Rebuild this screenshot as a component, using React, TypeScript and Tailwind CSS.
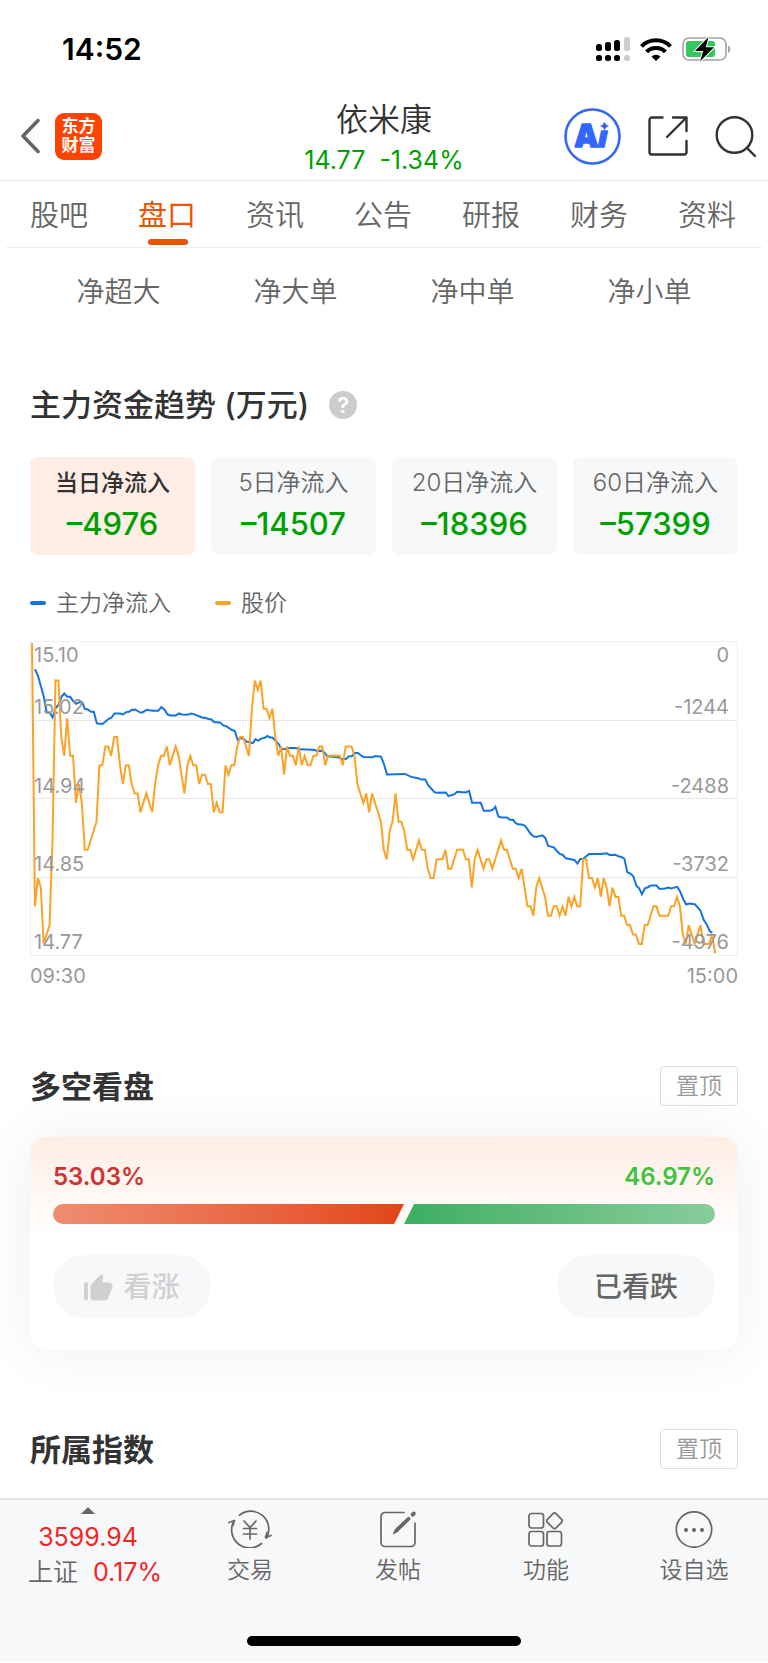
import { useState } from 'react';
import type { ReactNode } from 'react';

const TABS = ['股吧', '盘口', '资讯', '公告', '研报', '财务', '资料'];
const ORDER_TYPES = ['净超大', '净大单', '净中单', '净小单'];

const PERIODS = [
  { label: '当日净流入', value: '–4976' },
  { label: '5日净流入', value: '–14507' },
  { label: '20日净流入', value: '–18396' },
  { label: '60日净流入', value: '–57399' },
];

const AXIS_ROWS = [
  { price: '15.02', flow: '-1244' },
  { price: '14.94', flow: '-2488' },
  { price: '14.85', flow: '-3732' },
  { price: '14.77', flow: '-4976' },
];

// one entry per minute, in cents below the 15.10 high
const PRICE_DROPS = [
  0, 28, 25, 26, 32, 31, 30, 21, 4, 4, 10, 12, 8, 12, 12, 17, 15, 17, 22, 22,
  21, 20, 19, 13, 13, 11, 11, 12, 10, 10, 13, 15, 13, 13, 15, 16, 16, 18, 17, 16,
  17, 18, 15, 13, 12, 12, 11, 13, 12, 11, 12, 14, 16, 13, 12, 13, 13, 15, 14, 14,
  15, 15, 18, 17, 18, 18, 13, 14, 13, 13, 11, 10, 10, 11, 12, 7, 4, 5, 4, 7,
  7, 8, 7, 10, 12, 11, 14, 11, 12, 12, 13, 11, 13, 12, 13, 13, 12, 12, 11, 11,
  13, 12, 12, 12, 12, 12, 13, 11, 11, 11, 12, 15, 16, 17, 16, 18, 16, 17, 18, 19,
  22, 23, 20, 19, 16, 19, 19, 20, 22, 22, 23, 22, 21, 22, 22, 24, 25, 25, 23, 23,
  23, 22, 24, 24, 23, 22, 22, 22, 23, 23, 26, 23, 22, 23, 24, 23, 23, 24, 23, 22,
  21, 22, 22, 23, 24, 24, 25, 24, 26, 28, 28, 29, 26, 25, 26, 27, 29, 29, 28, 28,
  29, 28, 29, 27, 28, 27, 28, 28, 23, 23, 25, 25, 26, 25, 27, 25, 26, 28, 26, 27,
  27, 29, 29, 30, 30, 31, 31, 32, 32, 30, 30, 29, 28, 28, 29, 29, 29, 29, 28, 28,
  27, 28, 31, 32, 30, 31, 32, 31, 30, 32, 32, 32, 31, 33,
];

const PRICE_POINTS = PRICE_DROPS.map((drop, minute) => `${(33 + minute * 8.82).toFixed(1)},${(39 + drop * 28.3).toFixed(1)}`).join(' ');

const FLOW_POINTS =
  '42,118 51,138 60,170 69,203 77,248 86,248 95,263 104,235 113,225 122,200 130,191 139,201 148,201 157,214 166,222 175,217 184,217 ' +
  '192,237 201,239 210,246 219,246 228,281 245,283 263,268 272,264 281,251 298,251 307,254 316,247 325,246 334,240 343,239 360,249 ' +
  '369,246 378,240 396,243 413,243 422,232 431,239 440,253 449,257 466,257 475,251 484,254 502,255 511,251 520,253 546,264 555,264 ' +
  '564,268 573,269 581,277 599,278 608,287 617,289 635,301 643,304 652,331 661,325 670,328 679,336 688,337 697,341 705,329 714,333 ' +
  '723,326 732,325 741,319 748,323 757,324 775,343 783,357 792,359 802,355 827,355 837,359 880,360 892,364 907,363 922,380 955,383 ' +
  '965,388 977,388 987,380 995,380 1005,370 1013,370 1030,382 1057,383 1066,379 1083,381 1092,404 1101,435 1155,433 1174,442 1195,446 ' +
  '1205,450 1216,450 1225,467 1243,487 1250,490 1278,489 1286,500 1304,494 1312,487 1338,489 1348,484 1357,520 1383,520 1392,544 ' +
  '1410,544 1419,541 1427,532 1436,561 1445,564 1462,564 1471,571 1480,571 1489,582 1498,585 1507,585 1516,589 1524,600 1533,613 ' +
  '1542,621 1550,623 1568,618 1577,625 1586,650 1603,654 1612,665 1621,674 1630,677 1639,687 1665,692 1674,703 1683,689 1692,688 ' +
  '1709,674 1745,674 1762,672 1771,677 1788,676 1797,681 1806,683 1815,688 1824,729 1833,733 1842,741 1851,769 1860,778 1868,795 ' +
  '1877,777 1886,774 1894,769 1912,769 1921,779 1938,778 1947,775 1956,778 1974,773 1983,787 1992,809 2001,826 2010,823 2027,825 ' +
  '2044,844 2054,873 2063,886 2072,906 2079,912';

function StatusBar() {
  return (
    <div className="flex items-center justify-between pt-[34px] pr-9 pb-7 pl-[62px]">
      <span className="text-[30px] leading-[30px] font-semibold text-black">14:52</span>
      <div className="flex items-center gap-2.5">
        <svg width="34" height="25" viewBox="0 0 34 25" aria-hidden="true">
          <rect x="0" y="7" width="6" height="7" rx="2.5" />
          <rect x="9" y="5" width="6" height="9" rx="2.5" />
          <rect x="18" y="3" width="6" height="11" rx="2.5" />
          <rect x="28" y="0" width="6" height="14" rx="2.5" fill="#ccc" />
          <rect x="0" y="18" width="6" height="6" rx="2.5" />
          <rect x="9" y="18" width="6" height="6" rx="2.5" />
          <rect x="18" y="18" width="6" height="6" rx="2.5" />
          <rect x="28" y="18" width="6" height="6" rx="2.5" fill="#ccc" />
        </svg>
        <svg width="32" height="23" viewBox="0 0 32 23" fill="none" stroke="#000" strokeWidth="4" aria-hidden="true">
          <path d="M1.500 8.300a20.500 20.500 0 0 1 29 0" />
          <path d="M6.600 13.800a13.300 13.300 0 0 1 18.800 0" />
          <path d="M11.500 18.600a6.300 6.300 0 0 1 9 0L16 23z" fill="#000" stroke="none" />
        </svg>
        <svg width="50" height="26" viewBox="0 0 50 26" aria-hidden="true">
          <rect x="1" y="2" width="43" height="22" rx="6" fill="none" stroke="#a3a3a3" strokeWidth="1.6" />
          <rect x="4" y="5" width="29" height="16" rx="3" fill="#34c759" />
          <path d="M46 9.500c3 1 3 6.500 0 7.500z" fill="#a3a3a3" />
          <path d="M26.500 1L13 15h8.200L18 25.500 32 11.300h-8.300z" fill="#000" stroke="#fff" strokeWidth="2" paintOrder="stroke" />
        </svg>
      </div>
    </div>
  );
}

function Header() {
  return (
    <header className="grid grid-cols-[1fr_auto_1fr] items-center border-b border-[#e8e8e8]">
      <div className="flex items-center gap-[15px] pl-5">
        <button type="button" aria-label="返回">
          <svg width="20" height="36" viewBox="0 0 20 36" fill="none" stroke="#666" strokeWidth="3.600" strokeLinecap="round" strokeLinejoin="round">
            <path d="M18 2.500L3 18l15 15.500" />
          </svg>
        </button>
        <span className="flex size-[47px] flex-col items-center justify-center rounded-[9px] bg-[#ff4400] text-[17px] leading-[19px] font-bold text-white">
          <span>东方</span>
          <span>财富</span>
        </span>
      </div>
      <div className="pt-2 text-center">
        <h1 className="text-[32px] leading-10 font-[350] text-[#333]">依米康</h1>
        <p className="flex gap-3.5 text-[25px] leading-10 text-[#00a000]">
          <span>14.77</span>
          <span>-1.34%</span>
        </p>
      </div>
      <div className="flex items-center justify-end gap-[27px] pr-3">
        <button type="button" aria-label="智能助手">
          <svg width="57" height="57" viewBox="0 0 57 57" fill="#3366ff">
            <circle cx="28.500" cy="28.500" r="27" fill="none" stroke="#3366ff" strokeWidth="2.600" />
            <g fontFamily="Open Sans" fontWeight="800" stroke="#3366ff" strokeWidth="1.600" strokeLinejoin="round">
              <text x="11" y="39" fontSize="31">A</text>
              <text x="34" y="39" fontSize="29" fontStyle="italic">ı</text>
            </g>
            <path d="M40.500 13.500q1 3.500 4.500 4.500-3.500 1-4.500 4.500-1-3.500-4.500-4.500 3.500-1 4.500-4.500z" />
          </svg>
        </button>
        <button type="button" aria-label="分享">
          <svg width="40" height="40" viewBox="0 0 40 40" fill="none" stroke="#333" strokeWidth="2.400" strokeLinecap="round" strokeLinejoin="round">
            <path d="M14.500 1.500H4A2.500 2.500 0 0 0 1.500 4v32A2.500 2.500 0 0 0 4 38.500h32a2.500 2.500 0 0 0 2.500-2.500V25" />
            <path d="M25 1.500h13.500V15M37.500 2.500L19 21" />
          </svg>
        </button>
        <button type="button" aria-label="搜索">
          <svg width="41" height="41" viewBox="0 0 41 41" fill="none" stroke="#333" strokeWidth="2.400" strokeLinecap="round">
            <circle cx="19.500" cy="19" r="17.800" />
            <path d="M32 32l8 8" />
          </svg>
        </button>
      </div>
    </header>
  );
}

function Tabs() {
  const [active, setActive] = useState('盘口');
  return (
    <nav className="mx-1.5 flex border-b border-[#eee]">
      {TABS.map((tab) => (
        <button
          key={tab}
          type="button"
          onClick={() => setActive(tab)}
          className={`relative flex-1 pt-[17px] pr-0.5 pb-[13px] text-[29px] leading-9 ${tab === active ? 'text-[#ea5504]' : 'font-[350] text-[#666]'}`}
        >
          {tab}
          {tab === active && <span className="absolute bottom-0.5 left-1/2 h-1.5 w-10 -translate-x-1/2 rounded-full bg-[#ea5504]" />}
        </button>
      ))}
    </nav>
  );
}

function TrendChart() {
  return (
    <div>
      <div className="relative mt-[22px] h-[315px] border border-[#f0f0f0]">
        <div className="absolute inset-0 flex flex-col">
          {AXIS_ROWS.map((row) => (
            <div key={row.price} className="flex-1 border-b border-[#e8e8e8] last:border-b-0" />
          ))}
        </div>
        <svg className="absolute inset-0 h-full w-full overflow-visible" viewBox="30 36 2124 942" preserveAspectRatio="none" fill="none" strokeWidth="2">
          <polyline points={FLOW_POINTS} stroke="#1473e0" vectorEffect="non-scaling-stroke" />
          <polyline points={PRICE_POINTS} stroke="#fba326" vectorEffect="non-scaling-stroke" />
        </svg>
        <div className="absolute inset-0 flex flex-col pr-2 pl-[3px] text-xl leading-[26px] text-[#999]">
          {AXIS_ROWS.map((row, i) => (
            <div key={row.price} className="flex flex-1 flex-col justify-end">
              {i === 0 && (
                <div className="mb-auto flex justify-between">
                  <span>15.10</span>
                  <span>0</span>
                </div>
              )}
              <div className="flex justify-between">
                <span>{row.price}</span>
                <span>{row.flow}</span>
              </div>
            </div>
          ))}
        </div>
      </div>
      <div className="mt-2 flex justify-between text-xl leading-6 text-[#999]">
        <span>09:30</span>
        <span>15:00</span>
      </div>
    </div>
  );
}

function FundTrend() {
  const [selected, setSelected] = useState(0);
  return (
    <section className="mt-[75px] px-[30px]">
      <div className="flex items-center gap-5">
        <h2 className="text-[31px] leading-10 font-medium text-[#333]">主力资金趋势 (万元)</h2>
        <button type="button" aria-label="说明" className="size-7 rounded-full bg-[#ccc] text-[22px] leading-7 font-semibold text-white">
          ?
        </button>
      </div>
      <div className="mt-8 grid grid-cols-4 gap-4">
        {PERIODS.map((period, i) => (
          <button
            key={period.label}
            type="button"
            onClick={() => setSelected(i)}
            className={`flex flex-col items-center gap-1 rounded-lg py-2.5 ${i === selected ? 'bg-[#ffede6]' : 'bg-[#f7f8fa]'}`}
          >
            <span className={`leading-8 ${i === selected ? 'text-[23px] font-medium text-[#333]' : 'text-2xl font-[350] text-[#666]'}`}>{period.label}</span>
            <span className="text-[31px] leading-[42px] font-medium text-[#00a000]">{period.value}</span>
          </button>
        ))}
      </div>
      <div className="mt-8 flex gap-11 text-[23px] leading-8 font-[350] text-[#666]">
        <span className="flex items-center gap-2.5">
          <span className="h-1 w-4 rounded-full bg-[#1473e0]" />
          主力净流入
        </span>
        <span className="flex items-center gap-2.5">
          <span className="h-1 w-4 rounded-full bg-[#fba326]" />
          股价
        </span>
      </div>
      <TrendChart />
    </section>
  );
}

function SectionTitle({ children }: { children: ReactNode }) {
  return (
    <div className="flex items-center justify-between">
      <h2 className="pt-0.5 text-[31px] leading-[38px] font-semibold text-[#333]">{children}</h2>
      <button type="button" className="rounded-sm border border-[#ddd] px-[15px] text-[23px] leading-[38px] font-[350] text-[#999]">
        置顶
      </button>
    </div>
  );
}

function Sentiment() {
  return (
    <section className="mt-[78px] px-[30px]">
      <SectionTitle>多空看盘</SectionTitle>
      <div className="mt-[31px] rounded-2xl bg-white bg-[linear-gradient(#ffede4,#fff_98px)] px-[23px] pt-6 pb-8 shadow-[0_0_60px_rgba(0,0,0,0.07)]">
        <div className="flex justify-between text-2xl leading-8 font-semibold">
          <span className="text-[#cc3333]">53.03%</span>
          <span className="text-[#3dc43d]">46.97%</span>
        </div>
        <div className="mt-[11px] flex h-5 overflow-hidden rounded-full">
          <div
            className="-mr-[5px] bg-linear-to-r from-[#f08c70] to-[#e34415] [clip-path:polygon(0_0,100%_0,calc(100%-10px)_100%,0_100%)]"
            style={{ width: '53.03%' }}
          />
          <div className="ml-[5px] flex-1 bg-linear-to-r from-[#3cae62] to-[#88cc9c] [clip-path:polygon(10px_0,100%_0,100%_100%,0_100%)]" />
        </div>
        <div className="mt-[31px] flex justify-between text-[28px] leading-[61px] font-medium">
          <button type="button" className="flex w-[158px] items-center justify-center gap-2.5 rounded-full bg-[#f7f8fa] pt-0.5 text-[#d0d0d2]">
            <svg width="29" height="27" viewBox="0 0 29 27" fill="currentColor" aria-hidden="true">
              <rect x="0" y="8" width="4" height="18.500" rx="2" />
              <path d="M6.500 13.500c0-1.800.6-3 1.800-4.200L16.200.9c1.200-1.100 3.100-.2 3 1.500l-.6 6.100h6.200c3 0 4.500 2.800 3.400 5.400l-4 10.200c-.6 1.500-1.700 2.400-3.300 2.400H10c-2.200 0-3.500-1.300-3.500-3.500z" />
            </svg>
            看涨
          </button>
          <button type="button" className="w-[158px] rounded-full bg-[#f7f8fa] pt-0.5 text-[#666]">
            已看跌
          </button>
        </div>
      </div>
    </section>
  );
}

function NavItem({ label, children }: { label: string; children: ReactNode }) {
  return (
    <button type="button" className="flex flex-1 flex-col items-center gap-1.5 pt-2.5 text-[23px] leading-8 font-[350] text-[#666]">
      <svg width="44" height="38" viewBox="0 0 44 38" fill="none" stroke="#666" strokeWidth="1.700" strokeLinecap="round" strokeLinejoin="round" aria-hidden="true">
        {children}
      </svg>
      {label}
    </button>
  );
}

function BottomBar() {
  return (
    <footer className="mt-[29px] border-t-2 border-[#dfe2e6] bg-[#f7f8fa] pb-4">
      <div className="flex items-start">
        <button type="button" className="flex w-[176px] flex-col items-center pt-[7px] text-[25px] text-[#f42525]">
          <svg width="14" height="7" viewBox="0 0 14 7" fill="#666" aria-hidden="true">
            <path d="M7 0l7 7H0z" />
          </svg>
          <span className="mt-1.5 leading-[34px]">3599.94</span>
          <span className="flex gap-[15px] pl-3.5 leading-9">
            <span className="font-[350] text-[#666]">上证</span>
            <span>0.17%</span>
          </span>
        </button>
        <NavItem label="交易">
          <path d="M11.500 5.200A18 18 0 0 1 38.500 28M33.500 33.500A18 18 0 0 1 5.500 12" />
          <path d="M1 12.500l5.500-2-1.500 5M43 25.500l-5.500 2 1.500-5" />
          <path d="M16 11l6 6.500 6-6.500M22 17.500V29M15.500 18.500h13M15.500 24h13" />
        </NavItem>
        <NavItem label="发帖">
          <path d="M28 2.500H9A4 4 0 0 0 5 6.500v26a4 4 0 0 0 4 4h26a4 4 0 0 0 4-4V13" />
          <path d="M17.500 23.500l2-4.500L32.500 7l2 2L21 22z" fill="#666" strokeWidth="1" />
          <path d="M36.700 4.700l1-1" strokeWidth="4" />
        </NavItem>
        <NavItem label="功能">
          <rect x="5" y="3.500" width="14.500" height="14.500" rx="2.500" />
          <rect x="5" y="21.500" width="14.500" height="14.500" rx="2.500" />
          <rect x="23" y="21.500" width="14.500" height="14.500" rx="2.500" />
          <path d="M29 3.600q1.500-1.500 3 0l5.600 5.700q1.500 1.500 0 3L32 18q-1.500 1.500-3 0l-5.600-5.700q-1.500-1.500 0-3z" />
        </NavItem>
        <NavItem label="设自选">
          <circle cx="22" cy="19.500" r="17.700" />
          <g fill="#666" stroke="none">
            <circle cx="14" cy="20" r="2" />
            <circle cx="22" cy="20" r="2" />
            <circle cx="30" cy="20" r="2" />
          </g>
        </NavItem>
      </div>
      <div className="mx-auto mt-[46px] h-2.5 w-[274px] rounded-full bg-black" />
    </footer>
  );
}

export default function App() {
  return (
    <div className="min-h-screen bg-white font-['Inter','Noto_Sans_CJK_SC',sans-serif]">
      <StatusBar />
      <Header />
      <Tabs />
      <div className="grid grid-cols-4 px-[30px] pt-[26px] text-center text-[28px] leading-9 font-[350] text-[#666]">
        {ORDER_TYPES.map((type) => (
          <span key={type}>{type}</span>
        ))}
      </div>
      <FundTrend />
      <Sentiment />
      <section className="mt-[79px] px-[30px]">
        <SectionTitle>所属指数</SectionTitle>
      </section>
      <BottomBar />
    </div>
  );
}
